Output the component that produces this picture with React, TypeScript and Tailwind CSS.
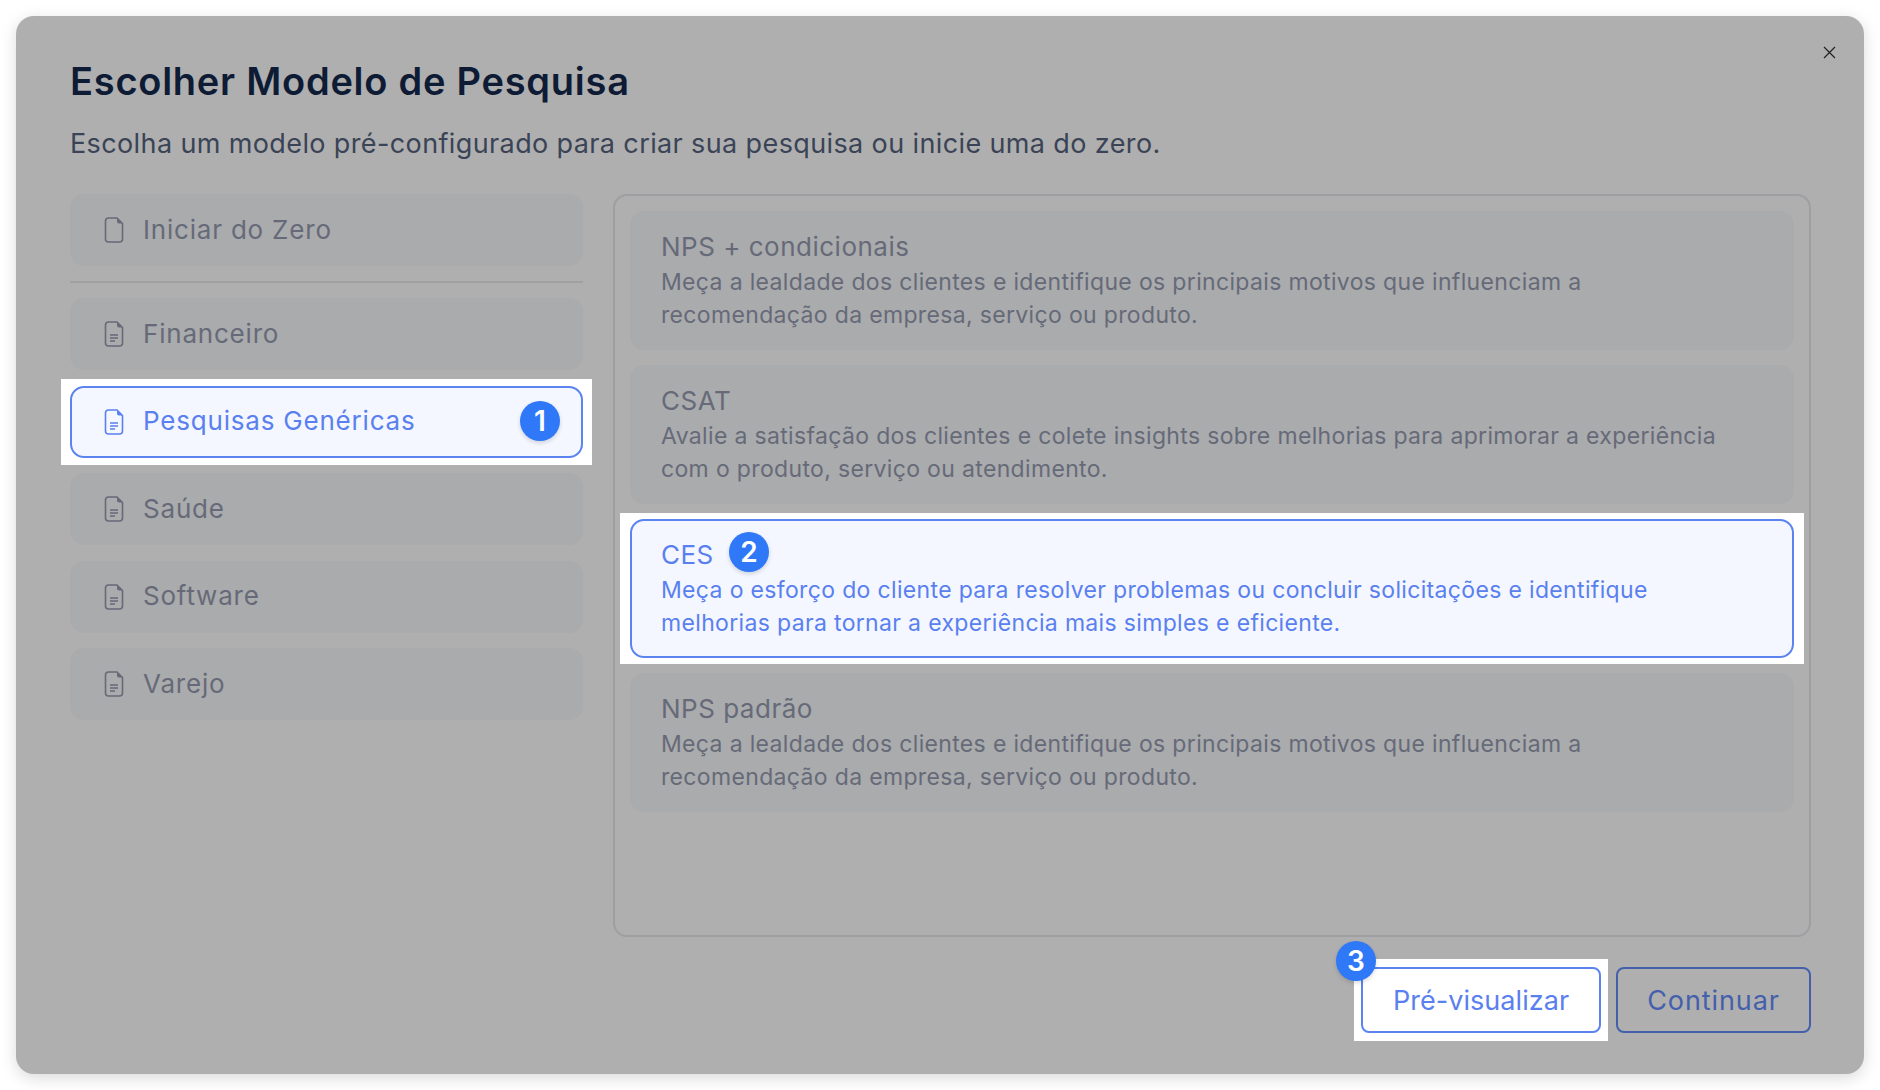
import clsx from 'clsx'

const categories = ['Financeiro', 'Pesquisas Genéricas', 'Saúde', 'Software', 'Varejo']

const templates = [
  {
    title: 'NPS + condicionais',
    lines: [
      'Meça a lealdade dos clientes e identifique os principais motivos que influenciam a',
      'recomendação da empresa, serviço ou produto.',
    ],
  },
  {
    title: 'CSAT',
    lines: [
      'Avalie a satisfação dos clientes e colete insights sobre melhorias para aprimorar a experiência',
      'com o produto, serviço ou atendimento.',
    ],
  },
  {
    title: 'CES',
    lines: [
      'Meça o esforço do cliente para resolver problemas ou concluir solicitações e identifique',
      'melhorias para tornar a experiência mais simples e eficiente.',
    ],
  },
  {
    title: 'NPS padrão',
    lines: [
      'Meça a lealdade dos clientes e identifique os principais motivos que influenciam a',
      'recomendação da empresa, serviço ou produto.',
    ],
  },
]

function DocIcon({ lines = true }: { lines?: boolean }) {
  return (
    <svg width="20" height="26" viewBox="0 0 19 26" fill="none" stroke="currentColor" strokeWidth="1.6" className="shrink-0">
      <path d="M4 1h8.5L18 6.5V22a3 3 0 0 1-3 3H4a3 3 0 0 1-3-3V4a3 3 0 0 1 3-3Z" />
      <path d="M12.5 1l5.5 5.5h-3.5a2 2 0 0 1-2-2Z" fill="currentColor" stroke="none" />
      {lines && <path d="M5.5 14h8M5.5 17h8M5.5 20h5" strokeWidth="1.4" />}
    </svg>
  )
}

function Badge({ n }: { n: number }) {
  return (
    <span className="flex h-10 w-10 items-center justify-center rounded-full bg-[#2f78f7] text-[28px] font-semibold leading-none text-white shadow-[0_2px_4px_rgba(0,0,0,0.15)]">
      {n}
    </span>
  )
}

function CategoryRow({ label, lines = true, active = false }: { label: string; lines?: boolean; active?: boolean }) {
  return (
    <div
      className={clsx(
        'flex h-[72px] items-center rounded-[14px] text-[26px] tracking-[0.8px]',
        active
          ? 'border-2 border-[#5b84f0] bg-[#f4f7ff] pl-[32px] text-[#5a80f0]'
          : 'bg-[#aaabad] pl-[34px] text-[#666a78]',
      )}
    >
      <DocIcon lines={lines} />
      <span className="mb-[2px] ml-[19px]">{label}</span>
    </div>
  )
}

export default function App() {
  return (
    <div className="h-[1090px] w-[1880px] overflow-hidden bg-white p-4 font-['Inter',sans-serif]">
      <div className="relative h-[1058px] w-[1848px] rounded-[18px] bg-[#afafaf] pl-[54px] pr-[53px] pt-[40px] shadow-[0_4px_16px_rgba(0,0,0,0.15)]">
        <button className="absolute right-[28px] top-[30px] text-[#222]">
          <svg width="13" height="13" viewBox="0 0 13 13" fill="none" stroke="currentColor" strokeWidth="1.2">
            <path d="M1 1l11 11M12 1L1 12" />
          </svg>
        </button>

        <h1 className="h-[50px] text-[38px] font-semibold leading-[50px] tracking-[0.75px] text-[#0e1b35]">
          Escolher Modelo de Pesquisa
        </h1>
        <p className="mt-[21px] h-[34px] text-[27px] leading-[34px] tracking-[0.38px] text-[#3a4456]">
          Escolha um modelo pré-configurado para criar sua pesquisa ou inicie uma do zero.
        </p>

        <div className="mt-[33px] flex gap-[30px]">
          <div className="w-[513px] shrink-0">
            <CategoryRow label="Iniciar do Zero" lines={false} />
            <div className="my-[15px] h-0.5 bg-[#a0a0a2]" />
            <div className="flex flex-col gap-[15.5px]">
              {categories.map((name) => {
                if (name !== 'Pesquisas Genéricas') return <CategoryRow key={name} label={name} />
                return (
                  <div key={name} className="relative -mx-[9px] -my-[7px] bg-white px-[9px] py-[7px]">
                    <CategoryRow label={name} active />
                    <div className="absolute right-[32px] top-[22px]">
                      <Badge n={1} />
                    </div>
                  </div>
                )
              })}
            </div>
          </div>

          <div className="flex h-[743px] w-[1198px] flex-col gap-[15px] rounded-[14px] border-2 border-[#9e9ea3] p-[15px]">
            {templates.map((t) => {
              const active = t.title === 'CES'
              const card = (
                <div
                  className={clsx(
                    'h-[139px] rounded-[14px]',
                    active
                      ? 'border-2 border-[#5b84f0] bg-[#f4f7ff] px-[29px] pt-[16px] text-[#5a80f0]'
                      : 'bg-[#aaabad] px-[31px] pt-[18px] text-[#666a78]',
                  )}
                >
                  <div className="flex h-[36px] items-center text-[26px] leading-[36px] tracking-[0.5px]">{t.title}</div>
                  <div className="mt-[1px] text-[23px] leading-[33px] tracking-[0.34px]">
                    {t.lines.map((line) => (
                      <div key={line}>{line}</div>
                    ))}
                  </div>
                </div>
              )
              if (!active) return <div key={t.title}>{card}</div>
              return (
                <div key={t.title} className="relative -mx-[10px] -my-[6px] bg-white px-[10px] py-[6px]">
                  {card}
                  <div className="absolute left-[109px] top-[19px]">
                    <Badge n={2} />
                  </div>
                </div>
              )
            })}
          </div>
        </div>

        <div className="mt-[30px] flex justify-end gap-[15px] text-[27px]">
          <div className="relative -mx-[7px] -my-2 bg-white px-[7px] py-2">
            <button className="h-[66px] w-[240px] rounded-[8px] border-2 border-[#5b84f0] pt-[2px] tracking-[0.05px] text-[#5a80f0]">
              Pré-visualizar
            </button>
            <div className="absolute -left-[18px] -top-[18px]">
              <Badge n={3} />
            </div>
          </div>
          <button className="h-[66px] w-[195px] rounded-[8px] border-2 border-[#4460ad] pt-[2px] tracking-[0.9px] text-[#4460ad]">
            Continuar
          </button>
        </div>
      </div>
    </div>
  )
}
